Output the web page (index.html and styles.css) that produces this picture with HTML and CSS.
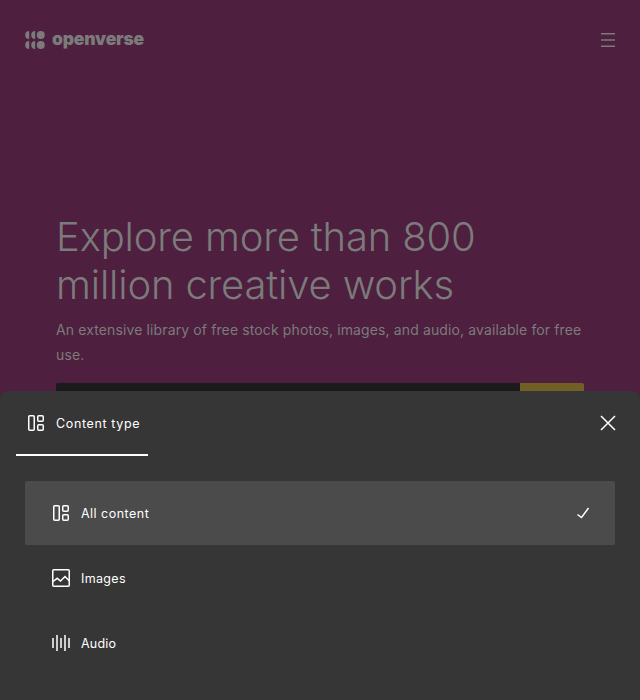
FILE: index.html
```html
<!DOCTYPE html>
<html lang="en">
<head>
<meta charset="utf-8">
<title>Openverse</title>
<link rel="stylesheet" href="styles.css">
</head>
<body>
<div class="page">
  <header class="header">
    <a class="brand">
      <svg class="brand-mark" width="20" height="18" viewBox="0 0 20 18" fill="currentColor"><path d="M4.2 0a4 4 0 0 0 0 8zM10.2 0a4 4 0 0 0 0 8zM4.2 10a4 4 0 0 0 0 8zM10.2 10a4 4 0 0 0 0 8z"/><circle cx="15.8" cy="4" r="4"/><circle cx="15.8" cy="14" r="4"/></svg>
      <span class="brand-name">openverse</span>
    </a>
    <svg class="menu" width="14" height="14" viewBox="0 0 14 14" fill="currentColor"><path d="M0 0h14v1.5H0zM0 6.25h14v1.5H0zM0 12.5h14V14H0z"/></svg>
  </header>
  <main class="hero">
    <h1>Explore more than 800 million creative works</h1>
    <p>An extensive library of free stock photos, images, and audio, available for free use.</p>
    <div class="search"><div class="field"></div><div class="submit"></div></div>
  </main>
</div>
<section class="sheet">
  <div class="sheet-head">
    <div class="tab"><svg class="icon" viewBox="0 0 24 24"><rect x="4.75" y="4.75" width="5.5" height="14.5" rx="1"/><rect x="13.75" y="4.75" width="5.5" height="5.5" rx="1"/><rect x="13.75" y="13.75" width="5.5" height="5.5" rx="1"/></svg><span class="tab-label">Content type</span></div>
    <svg class="icon close" viewBox="0 0 24 24"><path d="M5 5l14 14M19 5L5 19"/></svg>
  </div>
  <ul class="options">
    <li class="option selected"><svg class="icon" viewBox="0 0 24 24"><rect x="4.75" y="4.75" width="5.5" height="14.5" rx="1"/><rect x="13.75" y="4.75" width="5.5" height="5.5" rx="1"/><rect x="13.75" y="13.75" width="5.5" height="5.5" rx="1"/></svg><span>All content</span><svg class="icon check" viewBox="0 0 24 24"><path d="M6.5 13.5l4 3L17.5 7"/></svg></li>
    <li class="option images"><svg class="icon" viewBox="0 0 24 24"><rect x="3.75" y="3.75" width="16.5" height="16.5" rx="1"/><path d="M4 15.5l4.2-3.2 3.3 2.7 4.5-4.5 4.2 4.3"/></svg><span>Images</span></li>
    <li class="option audio"><svg class="icon" viewBox="0 0 24 24"><path d="M4 7v10M8 4v16M12 7v10M16 4v16M20 7v10"/></svg><span>Audio</span></li>
  </ul>
</section>
</body>
</html>
```
FILE: styles.css
```css
* { box-sizing: border-box; margin: 0; padding: 0; }
body { width: 640px; height: 700px; overflow: hidden; position: relative; background: #4e1f3f; font-family: Inter, sans-serif; }
.page { color: #7b7b7b; }
.header { height: 80px; padding: 0 25px; display: flex; align-items: center; justify-content: space-between; }
.brand { display: flex; align-items: center; gap: 7px; }
.brand-name { font-size: 17.5px; font-weight: 900; line-height: 20px; letter-spacing: -0.2px; position: relative; top: -1px; }
.menu { display: block; }
.hero { padding: 133px 56px 0; }
h1 { font-size: 40px; line-height: 48px; font-weight: 300; letter-spacing: -0.17px; }
p { margin-top: 8px; font-size: 14px; line-height: 25px; letter-spacing: 0.12px; margin-right: -8px; }
.search { display: flex; height: 64px; margin-top: 16px; border-radius: 2px; overflow: hidden; }
.field { flex: 1; background: #1b1b1b; }
.submit { width: 64px; background: #716024; }
.sheet { position: absolute; left: 0; top: 391px; width: 640px; height: 309px; background: #363636; color: #fff; border-radius: 8px 8px 0 0; font-size: 12.5px; line-height: 17px; letter-spacing: 0.48px; }
.sheet-head { display: flex; justify-content: space-between; align-items: flex-start; padding: 0 20px 0 16px; }
.tab { display: flex; align-items: center; gap: 8px; width: 132px; height: 65px; padding: 0 8px; border-bottom: 2px solid #fff; white-space: nowrap; }
.tab-label { padding-top: 1px; letter-spacing: 0.63px; }
.icon { width: 24px; height: 24px; flex: none; fill: none; stroke: currentColor; stroke-width: 1.5; }
.close { margin-top: 20px; }
.options { list-style: none; padding: 25px 25px 0; display: grid; gap: 1px; }
.option { height: 64px; display: flex; align-items: center; gap: 8px; padding: 0 20px 0 24px; border-radius: 2px; }
.selected { background: #4b4b4b; }
.images { letter-spacing: 0.33px; }
.audio { letter-spacing: 0.18px; }
.check { margin-left: auto; }
```
